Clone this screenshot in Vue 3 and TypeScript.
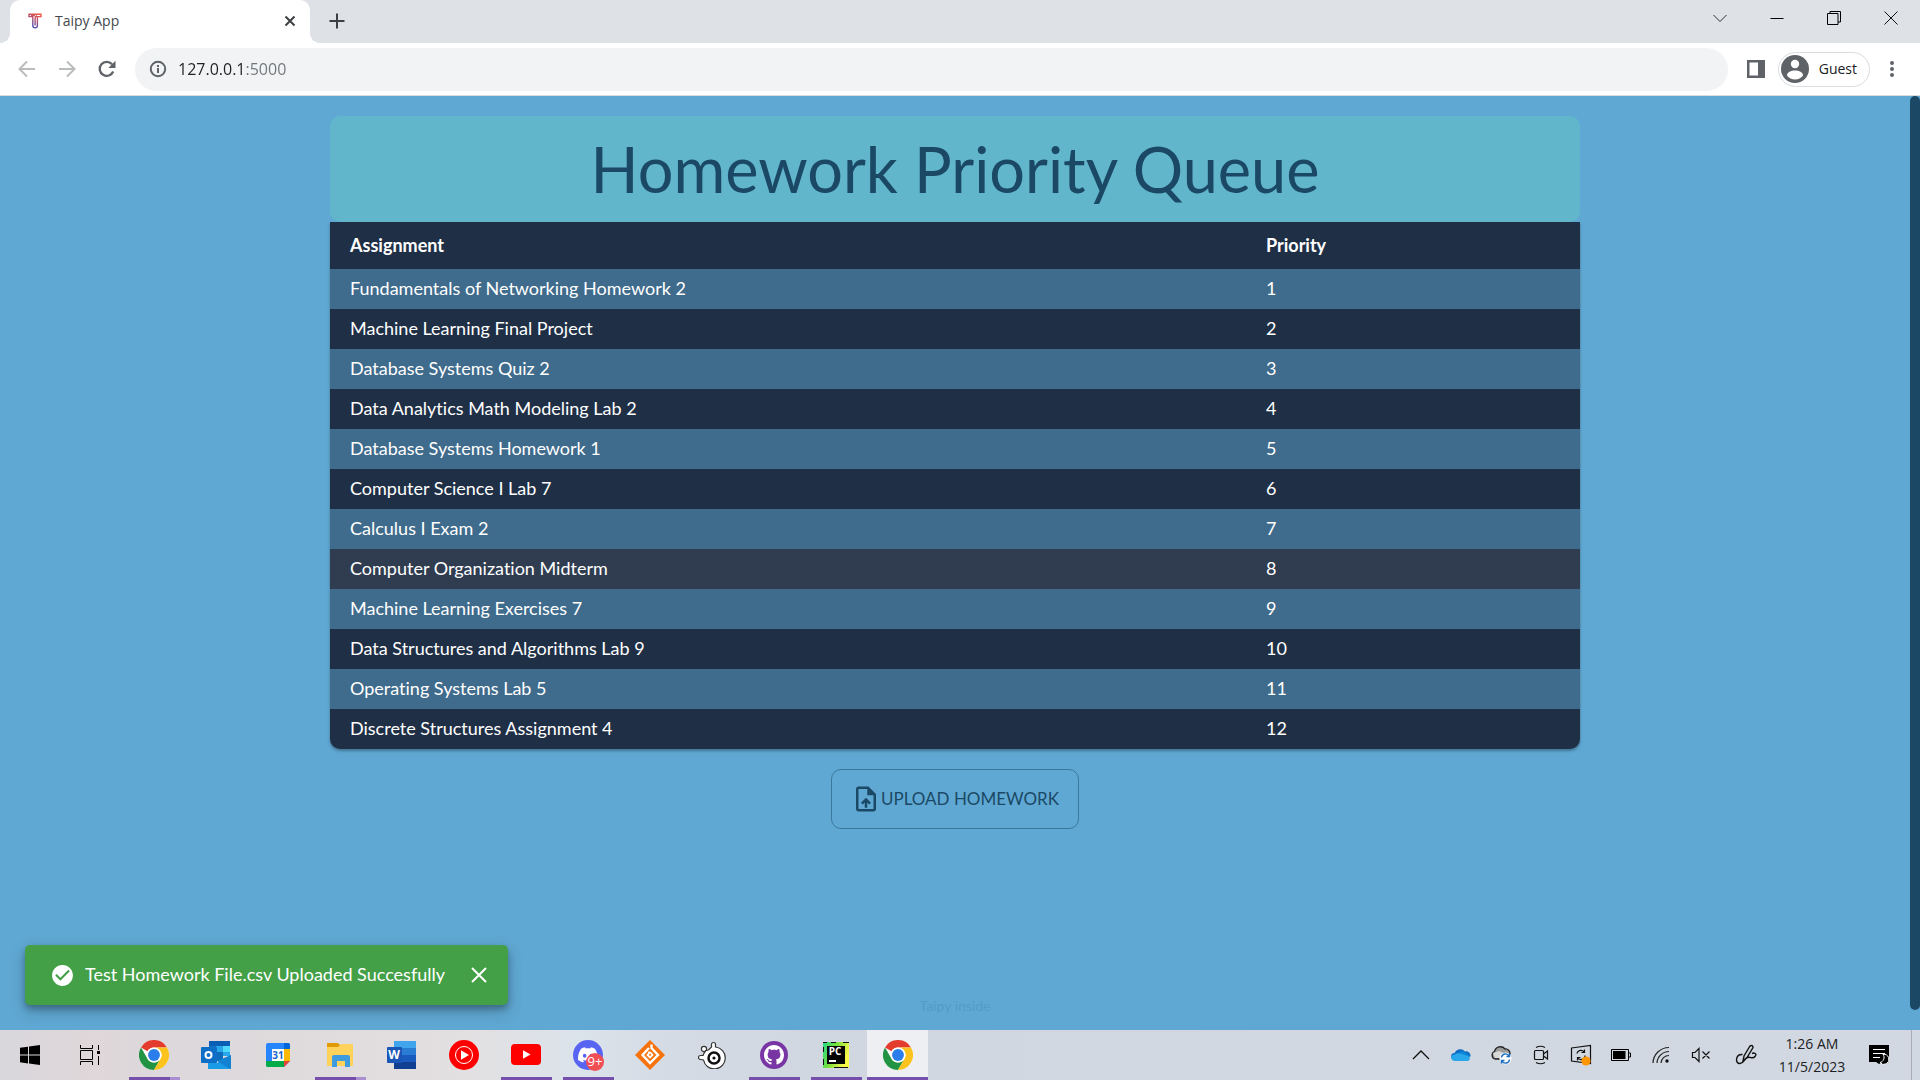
<script setup lang="ts">
import { ref } from 'vue'

interface Assignment {
  name: string
  priority: number
}

const names: string[] = [
  'Fundamentals of Networking Homework 2',
  'Machine Learning Final Project',
  'Database Systems Quiz 2',
  'Data Analytics Math Modeling Lab 2',
  'Database Systems Homework 1',
  'Computer Science I Lab 7',
  'Calculus I Exam 2',
  'Computer Organization Midterm',
  'Machine Learning Exercises 7',
  'Data Structures and Algorithms Lab 9',
  'Operating Systems Lab 5',
  'Discrete Structures Assignment 4',
]
const assignments: Assignment[] = names.map((name, i) => ({ name, priority: i + 1 }))
const address = ref('127.0.0.1:5000')
const highlighted = ref(8)
const toastOpen = ref(true)
</script>

<template>
  <div class="window">
    <svg class="defs" aria-hidden="true">
      <symbol id="chrome" viewBox="0 0 48 48">
        <circle cx="24" cy="24" r="24" fill="#fff" />
        <path d="M3.2 12A24 24 0 0 1 44.8 12H24A12 12 0 0 0 13.6 18z" fill="#e33b2e" />
        <path d="M3.2 12A24 24 0 0 0 24 48L34.4 30A12 12 0 0 1 13.6 30z" fill="#229342" />
        <path d="M44.8 12A24 24 0 0 1 24 48L34.4 30A12 12 0 0 0 24 12z" fill="#fcc31e" />
        <circle cx="24" cy="24" r="12" fill="#fff" />
        <circle cx="24" cy="24" r="9.5" fill="#2b7de9" />
      </symbol>
    </svg>

    <header class="tabstrip">
      <div class="tab">
        <svg class="favicon" width="14" height="16" viewBox="0 0 14 16" fill="none" stroke-width="1.4">
          <defs>
            <linearGradient id="fav" gradientUnits="userSpaceOnUse" x1="12" y1="0" x2="4" y2="15">
              <stop offset="0" stop-color="#ff5a3c" />
              <stop offset=".45" stop-color="#b8506e" />
              <stop offset="1" stop-color="#3a4cc0" />
            </linearGradient>
          </defs>
          <path d="M1 1.2h12v2.4H9.4v9a2.3 2.3 0 0 1-4.6 0v-9H1zM7.1 12.5V5.5q0-2 2-2.8M3 2.6h4" stroke="url(#fav)" />
        </svg>
        <span class="tab-title">Taipy App</span>
        <button class="icon-btn tab-close" aria-label="Close tab">
          <svg width="12" height="12" viewBox="0 0 12 12" stroke="#3c4043" stroke-width="2"><path d="M1.5 1.5l9 9M10.5 1.5l-9 9" /></svg>
        </button>
      </div>
      <button class="icon-btn new-tab" aria-label="New tab">
        <svg width="16" height="16" viewBox="0 0 16 16" stroke="#3c4043" stroke-width="2"><path d="M8 .5v15M.5 8h15" /></svg>
      </button>
      <div class="window-buttons">
        <button class="icon-btn" aria-label="Search tabs">
          <svg width="14" height="14" viewBox="0 0 14 14" fill="none" stroke="#333"><path d="M.5 4L7 10.500 13.500 4" /></svg>
        </button>
        <button class="icon-btn" aria-label="Minimize">
          <svg width="14" height="14" viewBox="0 0 14 14" fill="none" stroke="#000"><path d="M.5 7.500h13" /></svg>
        </button>
        <button class="icon-btn" aria-label="Restore">
          <svg width="14" height="14" viewBox="0 0 14 14" fill="none" stroke="#000"><path d="M.5 2.500h10.500v11H.5zM3 2.500v-2h10.500v10.500H11" /></svg>
        </button>
        <button class="icon-btn" aria-label="Close window">
          <svg width="14" height="14" viewBox="0 0 14 14" fill="none" stroke="#111"><path d="M.5.5l13 13M13.500.5l-13 13" /></svg>
        </button>
      </div>
    </header>

    <nav class="toolbar" aria-label="Browser">
      <button class="icon-btn nav-btn" aria-label="Back">
        <svg width="18" height="18" viewBox="0 0 18 18" fill="none" stroke="#babcbe" stroke-width="2"><path d="M17 9H2M9 1.500L1.500 9 9 16.500" /></svg>
      </button>
      <button class="icon-btn nav-btn" aria-label="Forward">
        <svg width="18" height="18" viewBox="0 0 18 18" fill="none" stroke="#babcbe" stroke-width="2"><path d="M1 9h15M9 1.500L16.500 9 9 16.500" /></svg>
      </button>
      <button class="icon-btn nav-btn" aria-label="Reload">
        <svg width="18" height="18" viewBox="0 0 18 18"><path d="M15.200 11.500A7 7 0 1 1 14 4.200" fill="none" stroke="#5f6368" stroke-width="2.300" /><path d="M17.500.8v7.200h-7.200z" fill="#5f6368" /></svg>
      </button>
      <div class="omnibox">
        <svg width="18" height="18" viewBox="0 0 18 18" fill="none" stroke="#5f6368" stroke-width="2"><circle cx="9" cy="9" r="7.200" /><path d="M9 8v5M9 5v2" /></svg>
        <input v-model="address" class="address" type="text" aria-label="Address" />
      </div>
      <button class="icon-btn panel-btn" aria-label="Side panel">
        <svg width="20" height="20" viewBox="0 0 20 20"><path d="M1 1h18v18H1zM3.500 3.500v13H12v-13z" fill="#5f6368" fill-rule="evenodd" /></svg>
      </button>
      <button class="guest">
        <svg width="28" height="28" viewBox="0 0 28 28"><circle cx="14" cy="14" r="14" fill="#5f6368" /><circle cx="14" cy="9" r="4.200" fill="#fff" /><path d="M6 20.500C6 17 10 15.500 14 15.500s8 1.500 8 5A10.200 10.200 0 0 1 14 24.500a10.200 10.200 0 0 1-8-4z" fill="#fff" /></svg>
        <span>Guest</span>
      </button>
      <button class="icon-btn menu-btn" aria-label="Menu">
        <svg width="6" height="18" viewBox="0 0 6 18" fill="#5f6368"><circle cx="3" cy="3" r="2" /><circle cx="3" cy="9" r="2" /><circle cx="3" cy="15" r="2" /></svg>
      </button>
    </nav>

    <main class="page">
      <div class="content">
        <h1 class="title">Homework Priority Queue</h1>
        <table class="queue">
          <thead>
            <tr>
              <th class="col-name" scope="col">Assignment</th>
              <th scope="col">Priority</th>
            </tr>
          </thead>
          <tbody>
            <tr v-for="a in assignments" :key="a.priority" :class="{ hovered: a.priority === highlighted }">
              <td>{{ a.name }}</td>
              <td>{{ a.priority }}</td>
            </tr>
          </tbody>
        </table>
        <button class="upload">
          <svg width="30" height="30" viewBox="0 0 24 24" fill="#1b4965"><path d="M14 2H6c-1.100 0-1.990.9-1.990 2L4 20c0 1.100.89 2 1.990 2H18c1.100 0 2-.9 2-2V8l-6-6zm4 18H6V4h7v5h5v11zM8 15.010l1.410 1.410L11 14.840V19h2v-4.160l1.590 1.590L16 15.010 12.010 11 8 15.010z" /></svg>
          <span>UPLOAD HOMEWORK</span>
        </button>
        <a class="inside" href="#">Taipy inside</a>
      </div>
      <div class="scrollbar"><div class="thumb"></div></div>

      <div v-if="toastOpen" class="toast" role="alert">
        <svg width="25" height="25" viewBox="0 0 24 24" fill="#fff"><path d="M12 2C6.500 2 2 6.500 2 12S6.500 22 12 22 22 17.500 22 12 17.500 2 12 2M10 17L5 12L6.410 10.590L10 14.170L17.590 6.580L19 8L10 17Z" /></svg>
        <span class="toast-text">Test Homework File.csv Uploaded Succesfully</span>
        <button class="icon-btn" aria-label="Dismiss" @click="toastOpen = false">
          <svg width="16" height="16" viewBox="0 0 16 16" stroke="#fff" stroke-width="2"><path d="M1 1l14 14M15 1L1 15" /></svg>
        </button>
      </div>
    </main>

    <footer class="taskbar">
      <button class="sys" aria-label="Start">
        <svg width="20" height="20" viewBox="0 0 20 20"><path d="M0 2.800L8 1.700v7.900H0zM9 1.500L20 0v9.600H9zM0 10.500h8v7.900L0 17.300zM9 10.500h11V20L9 18.500z" /></svg>
      </button>
      <button class="sys" aria-label="Task view">
        <svg width="20" height="20" viewBox="0 0 20 20" fill="none" stroke="#000"><path d="M.5 0v3.500h12V0M.5 5.500h12v9H.5zM.5 20v-3.500h12V20M18.500 0v5M18.500 11v9" /><path d="M17 6h3v3h-3z" fill="#000" stroke="none" /></svg>
      </button>
      <div class="apps">
        <button class="app open multi" aria-label="Chrome"><svg width="30" height="30"><use href="#chrome" /></svg></button>
        <button class="app" aria-label="Outlook">
          <svg width="30" height="30" viewBox="0 0 30 30">
            <path d="M8 1h21v5H8z" fill="#0a5fb5" /><path d="M8 6h7v12H8z" fill="#1273c9" /><path d="M15 6h7v6h-7z" fill="#28a8ea" /><path d="M22 6h7v6h-7z" fill="#50d9ff" /><path d="M15 12h7v9h-7z" fill="#0f6cbd" /><path d="M22 12h7v4h-7z" fill="#28a8ea" />
            <path d="M30 15L16 23l-9-3v9h22a1 1 0 0 0 1-1z" fill="#1a9be8" /><path d="M16 21l13 8a1 1 0 0 0 1-1V15z" fill="#1482d2" />
            <rect y="7" width="16" height="16" rx="1" fill="#0f6fc6" /><circle cx="7.500" cy="15" r="3" fill="none" stroke="#fff" stroke-width="2" />
          </svg>
        </button>
        <button class="app" aria-label="Calendar">
          <svg width="24" height="24" viewBox="0 0 24 24">
            <path d="M0 2a2 2 0 0 1 2-2h20a2 2 0 0 1 2 2v16l-6 6H2a2 2 0 0 1-2-2z" fill="#2684fc" /><path d="M18 6h6v12h-6z" fill="#ffba00" /><path d="M0 18h18v6H2a2 2 0 0 1-2-2z" fill="#00ac47" /><path d="M18 18h6l-6 6z" fill="#ea4335" /><path d="M18 0h4a2 2 0 0 1 2 2v4h-6z" fill="#0066da" /><path d="M6 6h12v12H6z" fill="#fff" />
            <text x="12" y="16" text-anchor="middle" font-family="Open Sans, sans-serif" font-size="10" font-weight="700" fill="#1a66ca">31</text>
          </svg>
        </button>
        <button class="app open multi" aria-label="File Explorer">
          <svg width="28" height="24" viewBox="0 0 28 24"><path d="M1 0h11l2 2v4H1z" fill="#e09b06" /><path d="M1 4h11l3-3h11a1 1 0 0 1 1 1v20a1 1 0 0 1-1 1H1z" fill="#ffd25c" /><path d="M6 24V14a2 2 0 0 1 2-2h14a2 2 0 0 1 2 2v10h-5v-6h-8v6z" fill="#3f9be0" /></svg>
        </button>
        <button class="app" aria-label="Word">
          <svg width="30" height="30" viewBox="0 0 30 30">
            <path d="M7 1h22v7H7z" fill="#41a5ee" /><path d="M7 8h22v7H7z" fill="#2b7cd3" /><path d="M7 15h22v7H7z" fill="#185abd" /><path d="M7 22h22v7H7z" fill="#103f91" />
            <rect y="7" width="15" height="16" rx="1" fill="#1a56b5" />
            <text x="7" y="19" text-anchor="middle" font-family="Open Sans, sans-serif" font-size="12" font-weight="700" fill="#fff">W</text>
          </svg>
        </button>
        <button class="app" aria-label="YouTube Music">
          <svg width="30" height="30" viewBox="0 0 30 30"><circle cx="15" cy="15" r="15" fill="#f00" /><circle cx="15" cy="15" r="8.500" fill="none" stroke="#fff" /><path d="M12 10.300L20 15l-8 4.700z" fill="#fff" /></svg>
        </button>
        <button class="app open" aria-label="YouTube">
          <svg width="30" height="22" viewBox="0 0 30 22"><rect width="30" height="21" rx="4" fill="#f00" /><path d="M12 6.300l7.500 4.200-7.500 4.200z" fill="#fff" /></svg>
        </button>
        <button class="app open" aria-label="Discord">
          <svg width="30" height="30" viewBox="0 0 30 30">
            <circle cx="15" cy="15" r="15" fill="#5865f2" />
            <path transform="translate(5 5) scale(.83)" fill="#fff" d="M20.317 4.370a19.790 19.790 0 0 0-4.885-1.515.074.074 0 0 0-.079.037c-.211.375-.445.865-.608 1.250-1.845-.276-3.680-.276-5.487 0-.164-.393-.406-.874-.618-1.250a.077.077 0 0 0-.079-.037 19.740 19.740 0 0 0-4.885 1.515.070.070 0 0 0-.032.028C.533 9.046-.319 13.580.099 18.058a.082.082 0 0 0 .031.056c2.053 1.508 4.041 2.423 5.993 3.029a.078.078 0 0 0 .084-.028c.462-.630.873-1.295 1.226-1.994a.076.076 0 0 0-.042-.106c-.653-.248-1.274-.550-1.872-.892a.077.077 0 0 1-.008-.128l.372-.291a.074.074 0 0 1 .078-.011c3.928 1.793 8.180 1.793 12.061 0a.074.074 0 0 1 .079.010l.373.292a.077.077 0 0 1-.007.128 12.300 12.300 0 0 1-1.873.891.077.077 0 0 0-.041.107c.360.698.772 1.363 1.225 1.993a.076.076 0 0 0 .084.029c1.961-.607 3.950-1.522 6.002-3.029a.077.077 0 0 0 .031-.055c.500-5.177-.838-9.674-3.549-13.660a.061.061 0 0 0-.031-.029zM8.020 15.331c-1.183 0-2.157-1.086-2.157-2.419 0-1.333.956-2.419 2.157-2.419 1.211 0 2.176 1.095 2.157 2.419 0 1.333-.956 2.419-2.157 2.419zm7.975 0c-1.183 0-2.157-1.086-2.157-2.419 0-1.333.955-2.419 2.157-2.419 1.211 0 2.176 1.095 2.157 2.419 0 1.333-.946 2.419-2.157 2.419z" />
          </svg>
          <span class="badge">9+</span>
        </button>
        <button class="app" aria-label="Launcher">
          <svg width="30" height="30" viewBox="0 0 30 30"><path d="M15 0l15 15-15 15L0 15z" fill="#f5720c" /><path d="M14 8L7.500 15l7.500 8 8-8-6.500-7V4.500" fill="none" stroke="#fff" stroke-width="2.400" /><path d="M14 11.500v2l-1.500 1.500 2.500 2.500 2.500-2.500-2.500-3" fill="none" stroke="#fff" stroke-width="1.800" /></svg>
        </button>
        <button class="app" aria-label="SteelSeries">
          <svg width="28" height="28" viewBox="0 0 28 28"><g fill="#fff" stroke="#333" stroke-width="1.200"><circle cx="6" cy="8" r="2.600" /><path d="M13.500 6V3.500a2 2 0 0 1 4 0V6a11 11 0 1 1-12 13l-3-.5a2 2 0 0 1 0-4H5a11 11 0 0 1 3-5l2.500-.5z" /></g><circle cx="16" cy="17" r="5.500" fill="none" stroke="#111" stroke-width="2.500" /><circle cx="16" cy="17" r="1.600" fill="#111" /></svg>
        </button>
        <button class="app open" aria-label="GitHub Desktop">
          <svg width="28" height="28" viewBox="0 0 28 28"><circle cx="14" cy="14" r="14" fill="#7a35a5" /><path transform="translate(4 4) scale(1.250)" fill="#fff" d="M8 0C3.580 0 0 3.580 0 8c0 3.540 2.290 6.530 5.470 7.590.4.070.55-.17.55-.38 0-.19-.01-.82-.01-1.490-2.010.37-2.530-.49-2.690-.94-.09-.23-.48-.94-.82-1.130-.28-.15-.68-.52-.01-.53.63-.01 1.080.58 1.230.82.72 1.210 1.870.87 2.330.66.070-.52.28-.87.51-1.070-1.780-.2-3.640-.89-3.640-3.950 0-.87.31-1.590.82-2.150-.08-.2-.36-1.020.08-2.120 0 0 .67-.21 2.200.82.64-.18 1.320-.27 2-.27s1.360.09 2 .27c1.530-1.040 2.200-.82 2.200-.82.44 1.100.16 1.920.08 2.120.51.56.82 1.270.82 2.150 0 3.070-1.870 3.750-3.650 3.950.29.25.54.73.54 1.480 0 1.070-.01 1.930-.01 2.200 0 .21.15.46.55.38A8.010 8.010 0 0 0 16 8c0-4.420-3.580-8-8-8z" /></svg>
        </button>
        <button class="app open" aria-label="PyCharm">
          <svg width="26" height="26" viewBox="0 0 26 26">
            <defs><linearGradient id="pyc" x2="1" y2=".4"><stop offset="0" stop-color="#21d789" /><stop offset=".5" stop-color="#7be03a" /><stop offset="1" stop-color="#fcf84a" /></linearGradient></defs>
            <path d="M0 0h26v26H0z" fill="url(#pyc)" /><path d="M0 0h4v1H0zM8 0h5v1H8zM20 0h6v1h-6zM0 5h1v5H0zM0 17h1v6H0zM11 25h14v1H11z" fill="#111" /><path d="M4 4h18v18H4z" fill="#050505" /><path d="M6 18h7v2H6z" fill="#fff" />
            <text x="12" y="13" text-anchor="middle" font-family="Open Sans, sans-serif" font-size="10" font-weight="700" fill="#fff">PC</text>
          </svg>
        </button>
        <button class="app open active" aria-label="Chrome, Taipy App"><svg width="30" height="30"><use href="#chrome" /></svg></button>
      </div>

      <div class="tray">
        <button aria-label="Hidden icons"><svg width="20" height="20" viewBox="0 0 20 20" fill="none" stroke="#111" stroke-width="1.300"><path d="M2 14l8-8 8 8" /></svg></button>
        <button aria-label="OneDrive"><svg width="20" height="14" viewBox="0 0 20 14"><path d="M3.500 12A3.500 3.500 0 0 1 3.700 5 6 6 0 0 1 14 3.500a4.500 4.500 0 0 1 5.500 5z" fill="#0a6cc4" /><path d="M8 4.500A5.500 5.500 0 0 1 15 5l3.500 3-8 1z" fill="#0f86d8" /><path d="M3.500 13A3.400 3.400 0 0 1 1 7.500L7 5l10 3a2.600 2.600 0 0 1 0 5z" fill="#28a8ea" /></svg></button>
        <button aria-label="Cloud sync"><svg width="22" height="20" viewBox="0 0 22 20"><path d="M5 14A4 4 0 0 1 4.500 6.500 6 6 0 0 1 15 4a4.500 4.500 0 0 1 5 5l-8 5z" fill="#9c9c9c" stroke="#222" stroke-width="1.300" /><path d="M3 8l6-2 7 3-5 4H5z" fill="#d8d8d8" /><circle cx="15.500" cy="13.500" r="6" fill="#fff" /><path d="M11.500 12.500a4 4 0 0 1 7.500-1.500M19.500 14.500a4 4 0 0 1-7.500 1.500M19.500 8.500v3h-3M11.500 18.500v-3h3" fill="none" stroke="#1b6ec2" stroke-width="1.400" /></svg></button>
        <button aria-label="Meet now"><svg width="16" height="20" viewBox="0 0 16 20" fill="none" stroke="#111" stroke-width="1.200"><rect x="1.500" y="5.500" width="9" height="9" rx="1" /><path d="M10.500 9l4-3v8l-4-3M3 2.500Q7.500 0 12 2.500M3 17.500q4.500 2.500 9 0" /></svg></button>
        <button aria-label="Windows Update"><svg width="22" height="22" viewBox="0 0 22 22" fill="none" stroke="#111" stroke-width="1.200"><path d="M1.500 4L20.500 1.500v18L1.500 17z" /><path d="M7 9.500a4 4 0 0 1 7.500-1M15 11.500a4 4 0 0 1-7.500 2M14.500 5.500v3h-3M7.500 16.500v-3h3" /><circle cx="16" cy="17" r="4.600" fill="#ff9500" stroke="none" /></svg></button>
        <button aria-label="Battery"><svg width="20" height="12" viewBox="0 0 20 12"><path d="M.5.5h17v11H.5zM18 4h1.500v4H18" fill="none" stroke="#000" /><path d="M2 2h12.500v8H2z" /></svg></button>
        <button aria-label="Wi-Fi"><svg width="18" height="18" viewBox="0 0 18 18" fill="none" stroke="#222" stroke-width="1.200"><path d="M1 17A16 16 0 0 1 17 1.500M5 17A12 12 0 0 1 17 5.500M9 17a8 8 0 0 1 8-7.500" /><circle cx="15" cy="15" r="1.700" fill="#111" stroke="none" /></svg></button>
        <button aria-label="Volume muted"><svg width="20" height="16" viewBox="0 0 20 16" fill="none" stroke="#111" stroke-width="1.200"><path d="M1.500 5.500h2.500l4-4v13l-4-4H1.500zM11.500 4.500l7 7M18.500 4.500l-7 7" /></svg></button>
        <button class="pen" aria-label="Pen"><svg width="22" height="22" viewBox="0 0 22 22" fill="none" stroke="#111" stroke-width="1.400"><path d="M8 17l1-5 6-10q3-1.500 3 1.500l-6 10zM7.500 10.500C0 10 0 20 5 19.500c4 0 4-5 7.500-6s5 2 7.500-1-1-4-3-3" /></svg></button>
        <button class="clock"><time datetime="2023-11-05T01:26">1:26 AM<br />11/5/2023</time></button>
        <button class="notice" aria-label="Notifications"><svg width="20" height="20" viewBox="0 0 20 20"><path d="M0 0h20v17h-6l-4 2-3-2H0z" /><path d="M4 4.500h12M4 8.500h12M4 12.500h7" stroke="#fff" /><path d="M14 9.500a5 5 0 1 1-3 8 5 5 0 0 0 3-8z" fill="#000" stroke="#fff" /></svg></button>
        <button class="peek" aria-label="Show desktop"></button>
      </div>
    </footer>
  </div>
</template>

<style>
body {
  margin: 0;
}
</style>

<style scoped>
* {
  box-sizing: border-box;
}
.window {
  min-height: 100vh;
  display: flex;
  flex-direction: column;
  font-family: 'Open Sans', 'Noto Sans', sans-serif;
  color: #202124;
}
button {
  padding: 0;
  border: 0;
  background: none;
  font-family: inherit;
  color: inherit;
}
svg {
  display: block;
  flex: none;
}
.defs {
  position: absolute;
  width: 0;
  height: 0;
}
.icon-btn {
  display: flex;
  align-items: center;
  justify-content: center;
}

/* Tab strip */
.tabstrip {
  height: 43px;
  display: flex;
  align-items: flex-start;
  padding: 0 1px 0 10px;
  background: #dee1e6;
}
.tab {
  position: relative;
  width: 300px;
  height: 43px;
  display: flex;
  align-items: center;
  padding: 0 14px 2px 18px;
  border-radius: 10px 10px 0 0;
  background: #fff;
  font-size: 14px;
}
.tab::before,
.tab::after {
  content: '';
  position: absolute;
  bottom: 0;
  width: 10px;
  height: 10px;
}
.tab::before {
  left: -10px;
  background: radial-gradient(circle at 0 0, #dee1e6 10px, #fff 10px);
}
.tab::after {
  right: -10px;
  background: radial-gradient(circle at 100% 0, #dee1e6 10px, #fff 10px);
}
.tab-title {
  flex: 1;
  margin-left: 13px;
  color: #45494d;
}
.new-tab {
  width: 54px;
  height: 42px;
}
.window-buttons {
  display: flex;
  margin-left: auto;
}
.window-buttons .icon-btn {
  width: 57px;
  height: 36px;
}

/* Toolbar */
.toolbar {
  height: 53px;
  display: flex;
  align-items: center;
  padding: 0 18px 0 7px;
  border-bottom: 1px solid #dadce0;
  background: #fff;
}
.nav-btn {
  width: 40px;
  height: 40px;
}
.omnibox {
  flex: 1;
  height: 43px;
  display: flex;
  align-items: center;
  gap: 11px;
  margin-left: 8px;
  padding: 0 14px;
  border-radius: 22px;
  background: #f1f3f4;
}
.address {
  flex: 1;
  padding: 0;
  border: 0;
  outline: 0;
  font-family: inherit;
  font-size: 16px;
  color: transparent;
  background: linear-gradient(to right, #202124 66px, #70757a 66px);
  background-clip: text;
  -webkit-background-clip: text;
}
.panel-btn {
  width: 36px;
  height: 36px;
  margin-left: 10px;
}
.guest {
  height: 35px;
  display: flex;
  align-items: center;
  gap: 10px;
  margin-left: 4px;
  padding: 0 12px 0 2px;
  border: 1px solid #dadce0;
  border-radius: 18px;
  font-size: 14px;
}
.guest span {
  padding-bottom: 2px;
}
.menu-btn {
  width: 20px;
  margin-left: 12px;
}

/* Page */
.page {
  position: relative;
  flex: 1;
  display: flex;
  background: #5fa8d3;
  font-family: Lato, sans-serif;
  font-variant-ligatures: none;
}
.content {
  flex: 1;
  display: flex;
  flex-direction: column;
  align-items: center;
  padding: 20px 20px 15px;
}
.title {
  width: 100%;
  max-width: 1250px;
  margin: 0;
  padding: 16px 0;
  border-radius: 10px;
  background: #62b6cb;
  font-size: 63px;
  font-weight: 400;
  line-height: 74px;
  text-align: center;
  color: #1b4965;
}
.queue {
  width: 100%;
  max-width: 1250px;
  border-spacing: 0;
  table-layout: fixed;
  overflow: hidden;
  border-radius: 0 0 10px 10px;
  box-shadow: 0 2px 3px rgba(0, 0, 0, 0.3);
  background: #1f2f46;
  font-size: 18px;
  line-height: 24px;
  color: #fff;
}
.queue th,
.queue td {
  height: 40px;
  padding: 0 20px 2px;
  text-align: left;
}
.queue th {
  height: 47px;
}
.col-name {
  width: 916px;
}
.queue tbody tr:nth-child(odd) {
  background: #3f6b8c;
}
.queue tbody tr.hovered {
  background: #303d51;
}
.upload {
  height: 60px;
  display: flex;
  align-items: center;
  margin-top: 20px;
  padding: 0 19px;
  border: 1px solid #3d789c;
  border-radius: 10px;
  font-size: 17px;
  color: #1b4965;
}
.upload span {
  padding-bottom: 2px;
}
.inside {
  margin-top: auto;
  font-size: 14px;
  line-height: 18px;
  color: #539cc8;
  text-decoration: none;
}
.scrollbar {
  width: 10px;
  padding-bottom: 20px;
}
.thumb {
  height: 100%;
  border-radius: 5px;
  background: #1b4965;
}
.toast {
  position: absolute;
  left: 25px;
  bottom: 25px;
  height: 60px;
  display: flex;
  align-items: center;
  padding: 0 21px 0 25px;
  border-radius: 5px;
  background: #43a047;
  box-shadow: 0 4px 6px rgba(0, 0, 0, 0.25), 0 6px 16px rgba(0, 0, 0, 0.2);
  font-size: 18px;
  color: #fff;
}
.toast-text {
  margin: 0 26px 0 10px;
  padding-bottom: 2px;
}

/* Taskbar */
.taskbar {
  height: 50px;
  display: flex;
  background: linear-gradient(to right, #d9d7dc 0%, #dfd7da 5%, #dcd8dc 9%, #e0dbdc 17%, #e3e0e1 24%, #dbe3eb 30%, #d5dce5 34%, #d1d7e1 42%, #d2d8e2 100%);
}
.taskbar button {
  display: flex;
  align-items: center;
  justify-content: center;
}
.sys {
  width: 60px;
}
.apps {
  display: flex;
  gap: 1px;
  margin-left: 3px;
}
.app {
  position: relative;
  width: 61px;
}
.open::after {
  content: '';
  position: absolute;
  left: 6px;
  right: 4px;
  bottom: 0;
  height: 3px;
  background: #764fad;
}
.multi::after {
  background: linear-gradient(to right, #764fad 41px, #a98fcf 41px);
}
.active {
  background: #edeff3;
}
.active::after {
  left: 0;
  right: 0;
}
.badge {
  position: absolute;
  right: 14px;
  bottom: 9px;
  width: 18px;
  height: 18px;
  border-radius: 9px;
  background: #f04f55;
  font-size: 13px;
  line-height: 17px;
  text-align: center;
  color: #fff;
}
.tray {
  display: flex;
  margin-left: auto;
}
.tray button {
  width: 40px;
}
.tray .pen {
  width: 50px;
}
.tray .clock {
  width: 82px;
  font-size: 14px;
  line-height: 23px;
}
.tray .notice {
  width: 52px;
}
.tray .peek {
  width: 9px;
  margin-left: 6px;
  border-left: 1px solid #a9adb8;
}
</style>
